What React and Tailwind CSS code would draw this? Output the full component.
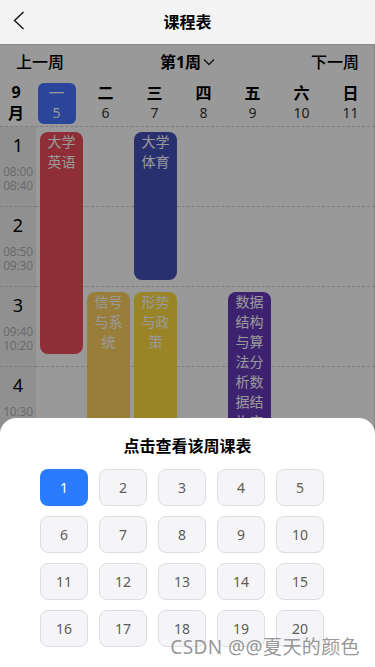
import React, { useState } from "react";

const FONT = { fontFamily: '"Noto Sans", "Noto Sans CJK SC", sans-serif' };

const days = [
  { name: "一", date: 5 },
  { name: "二", date: 6 },
  { name: "三", date: 7 },
  { name: "四", date: 8 },
  { name: "五", date: 9 },
  { name: "六", date: 10 },
  { name: "日", date: 11 },
];

const sections = [
  { no: 1, start: "08:00", end: "08:40" },
  { no: 2, start: "08:50", end: "09:30" },
  { no: 3, start: "09:40", end: "10:20" },
  { no: 4, start: "10:30", end: "11:10" },
  { no: 5, start: "11:20", end: "12:00" },
];

// day index, start section (0-based), length in sections
const courses = [
  { day: 0, start: 0, len: 3, name: "大学英语", color: "bg-[#ee4e5c]" },
  { day: 2, start: 0, len: 2, name: "大学体育", color: "bg-[#4450b9]" },
  { day: 1, start: 2, len: 3, name: "信号与系统", color: "bg-[#ffd262]" },
  { day: 2, start: 2, len: 3, name: "形势与政策", color: "bg-[#ffdc43]" },
  { day: 4, start: 2, len: 3, name: "数据结构与算法分析数据结构实验", color: "bg-[#6739bb]" },
];

const ROW_H = 80;
const COL_W = 47;

const BackIcon = () => (
  <svg width="12" height="19" viewBox="0 0 12 19" fill="none">
    <polyline points="10.5,1 1.5,9.5 10.5,18" stroke="#111" strokeWidth="1.4" />
  </svg>
);

const ChevronDown = () => (
  <svg width="12" height="8" viewBox="0 0 12 8" fill="none">
    <polyline points="1,1.5 6,6.5 11,1.5" stroke="#222" strokeWidth="1.3" />
  </svg>
);

const WeekSheet = ({ current, onPick }) => {
  const weeks = Array.from({ length: 20 }, (_, i) => i + 1);
  return (
    <div className="absolute left-0 right-0 bottom-0 h-[249px] bg-white rounded-t-2xl pt-4 pb-5">
      <p className="text-center text-[16px] leading-6 font-bold text-black">点击查看该周课表</p>
      <div className="w-[295px] mx-auto mt-[11px] grid grid-cols-5 gap-y-[10px]">
        {weeks.map((w) => (
          <button
            key={w}
            onClick={() => onPick(w)}
            className={
              w === current
                ? "w-[48px] h-[37px] rounded-lg bg-[#2b7bff] text-white text-[14px] flex items-center justify-center"
                : "w-[48px] h-[37px] rounded-lg bg-[#f5f5f7] border border-[#dddee4] text-[#5f5b58] text-[14px] flex items-center justify-center"
            }
          >
            {w}
          </button>
        ))}
      </div>
    </div>
  );
};

export default function App() {
  const [week, setWeek] = useState(1);

  return (
    <div className="relative w-[375px] h-[667px] overflow-hidden bg-white" style={FONT}>
      {/* Top bar */}
      <div className="relative h-[44px] bg-[#f4f4f4] flex items-center justify-center">
        <button className="absolute left-[13px] top-[11px]">
          <BackIcon />
        </button>
        <span className="text-[16px] font-bold text-black">课程表</span>
      </div>

      {/* Week switcher */}
      <div className="h-[36px] flex items-center justify-between px-4 text-[16px] font-medium text-black">
        <span>上一周</span>
        <span className="flex items-center gap-0.5 font-bold">
          第{week}周
          <ChevronDown />
        </span>
        <span>下一周</span>
      </div>

      {/* Day header */}
      <div className="h-[46px] flex items-center">
        <div className="w-[32px] flex flex-col items-center text-[16px] leading-[21px] font-bold text-black">
          <span>9</span>
          <span>月</span>
        </div>
        {days.map((d, i) => (
          <div key={d.name} className="flex-1 flex justify-center">
            <div
              className={
                i === 0
                  ? "w-[38px] h-[41px] rounded-md bg-[#4673ff] flex flex-col items-center justify-center text-white"
                  : "w-[38px] h-[41px] flex flex-col items-center justify-center text-black"
              }
            >
              <span className={i === 0 ? "text-[16px] leading-5" : "text-[16px] leading-5 font-bold"}>{d.name}</span>
              <span className={i === 0 ? "text-[14px] leading-5" : "text-[14px] leading-5 text-[#333]"}>{d.date}</span>
            </div>
          </div>
        ))}
      </div>

      {/* Timetable grid */}
      <div className="flex border-t border-dashed border-[#cfcfcf]">
        <div className="w-[36px] bg-[#f0f0f0]">
          {sections.map((s) => (
            <div
              key={s.no}
              className="h-[80px] flex flex-col items-center pt-[6px] border-b border-dashed border-[#cfcfcf]"
            >
              <span className="text-[18px] leading-6 text-black">{s.no}</span>
              <span className="text-[12px] leading-[14px] tracking-[-0.2px] text-[#b3b3b3] mt-[8px]">{s.start}</span>
              <span className="text-[12px] leading-[14px] tracking-[-0.2px] text-[#b3b3b3]">{s.end}</span>
            </div>
          ))}
        </div>
        <div className="relative flex-1">
          {sections.map((s) => (
            <div key={s.no} className="h-[80px] border-b border-dashed border-[#cfcfcf]" />
          ))}
          {courses.map((c) => (
            <div
              key={c.name}
              className={`absolute w-[43px] rounded-lg px-1 text-center text-[14px] leading-5 text-white overflow-hidden ${c.color}`}
              style={{
                left: 4 + c.day * COL_W,
                top: 5 + c.start * ROW_H,
                height: c.len * 74,
              }}
            >
              {c.name}
            </div>
          ))}
        </div>
      </div>

      {/* Dim overlay */}
      <div className="absolute left-0 right-0 top-[44px] bottom-0 bg-black/40 border-t border-r border-black/10" />

      <WeekSheet current={week} onPick={setWeek} />

      {/* Watermark */}
      <span className="absolute right-[15px] bottom-[8px] text-[19px] leading-6 tracking-[0.4px] text-[#8a8a8a]/90 pointer-events-none">
        CSDN @@夏天的颜色
      </span>
    </div>
  );
}
